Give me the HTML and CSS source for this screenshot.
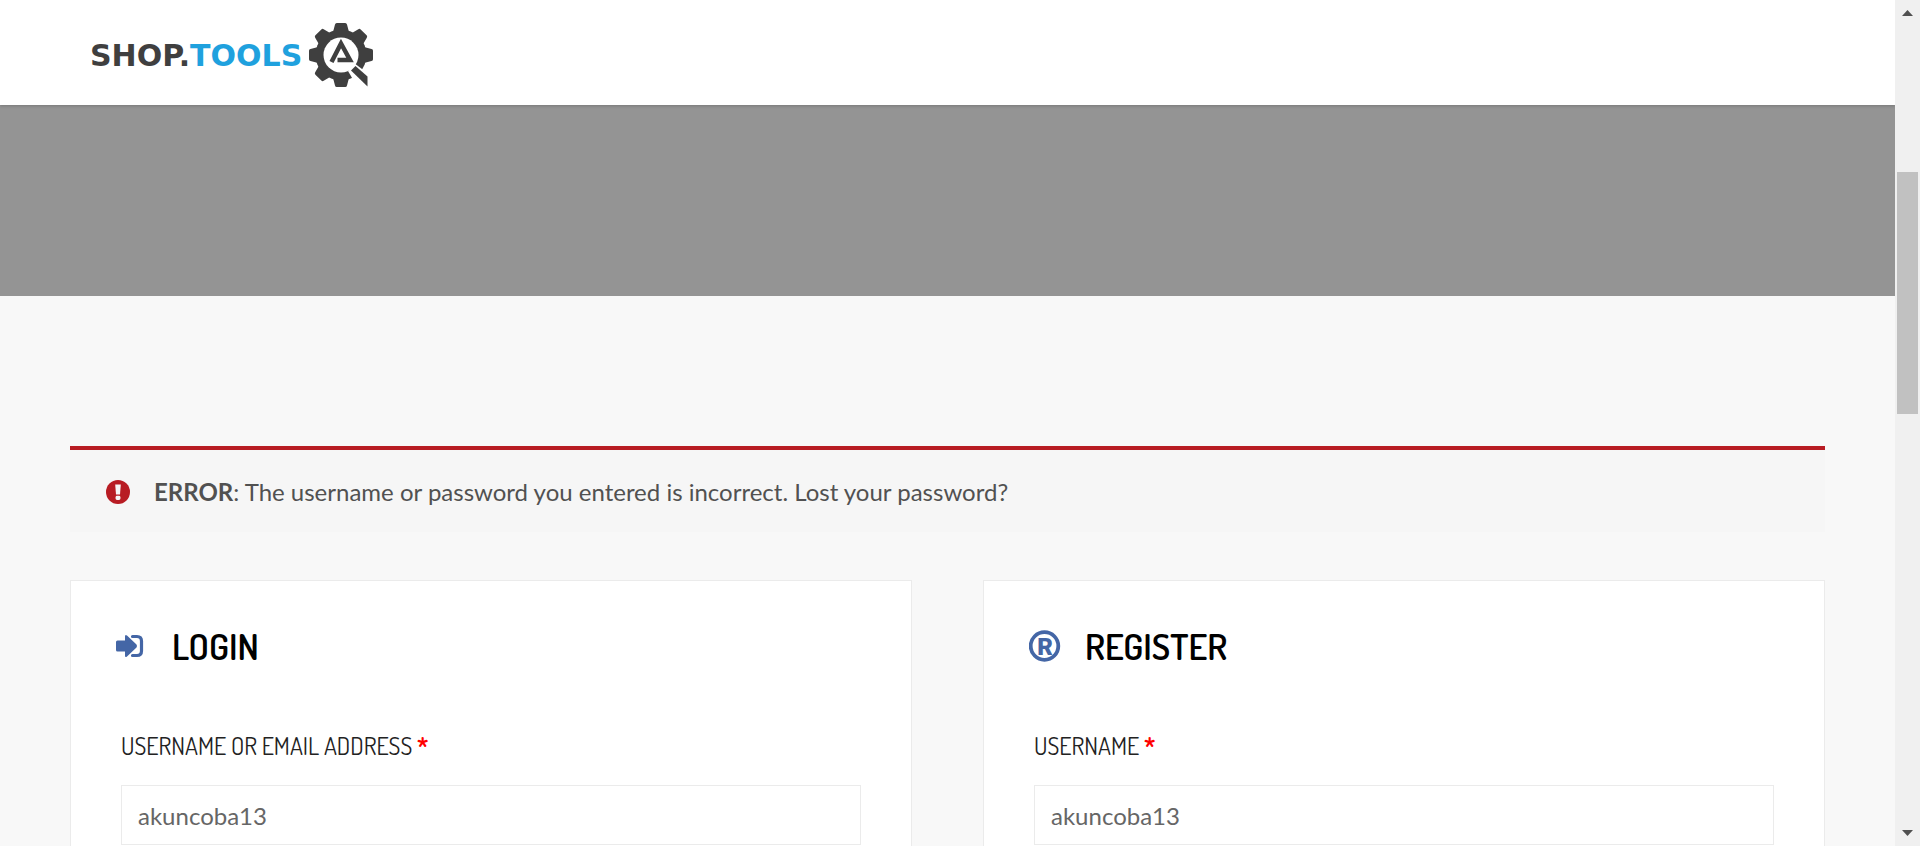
FILE: index.html
```html
<!DOCTYPE html>
<html lang="en">
<head>
<meta charset="utf-8">
<title>My Account - Shop.Tools</title>
<link rel="stylesheet" href="styles.css">
</head>
<body>
<div class="page">
  <header class="site-header">
    <a class="logo" href="#">
      <span class="logo-shop">SHOP.</span><span class="logo-tools">TOOLS</span>
      <svg class="logo-gear" viewBox="0 0 66 66" aria-hidden="true">
        <g fill="#3f3f3f">
          <circle cx="33" cy="33" r="25.500"/>
          <path id="tooth" d="M24.500 12L27 2.500Q27.300 1 28.800 1H37.200Q38.700 1 39 2.500L41.500 12Z"/>
          <use href="#tooth" transform="rotate(45 33 33)"/>
          <use href="#tooth" transform="rotate(90 33 33)"/>
          <use href="#tooth" transform="rotate(180 33 33)"/>
          <use href="#tooth" transform="rotate(225 33 33)"/>
          <use href="#tooth" transform="rotate(270 33 33)"/>
          <use href="#tooth" transform="rotate(315 33 33)"/>
        </g>
        <circle cx="33" cy="33" r="17.500" fill="#fff"/>
        <path d="M40 49L46 41L66 56V66H50Z" fill="#fff"/>
        <path d="M43 48.500L47.500 44L59.500 54.500V64.500Z" fill="#3f3f3f"/>
        <path d="M23.500 40L33 21.500L42 38H29.500" fill="none" stroke="#3f3f3f" stroke-width="4.500"/>
      </svg>
    </a>
  </header>
  <div class="banner"></div>
  <main class="content">
    <div class="notice" role="alert">
      <svg class="notice-icon" viewBox="0 0 24 24" aria-hidden="true">
        <circle cx="12" cy="12" r="12" fill="#b81c23"/>
        <path d="M9.200 4.500H14.800L14 14.500H10Z" fill="#f6f6f6"/>
        <rect x="9.600" y="15.800" width="4.800" height="4.200" rx="1.400" fill="#f6f6f6"/>
      </svg>
      <p class="notice-text"><strong>ERROR</strong>: The username or password you entered is incorrect. <a href="#">Lost your password?</a></p>
    </div>
    <div class="columns">
      <section class="card">
        <h2 class="card-title">
          <svg class="card-icon" viewBox="0 0 32 32" aria-hidden="true">
            <path d="M0 12Q0 10.500 1.500 10.500H9V6.500Q9 4 11 5.500L20.500 14.500Q21.500 16 20.500 17.500L11 26.500Q9 28 9 25.500V21.500H1.500Q0 21.500 0 20Z" fill="#4466a6"/>
            <path d="M16.500 6.500H21Q25.500 6.500 25.500 11V21Q25.500 25.500 21 25.500H16.500" fill="none" stroke="#4466a6" stroke-width="3.200" stroke-linecap="round"/>
          </svg>
          LOGIN
        </h2>
        <form class="form">
          <label class="label" for="login-user">USERNAME OR EMAIL ADDRESS <span class="required">*</span></label>
          <input class="field" id="login-user" type="text" value="akuncoba13">
        </form>
      </section>
      <section class="card">
        <h2 class="card-title">
          <svg class="card-icon" viewBox="0 0 32 32" aria-hidden="true">
            <circle cx="15.500" cy="16" r="13.800" fill="none" stroke="#4466a6" stroke-width="3.800"/>
            <text class="registered" x="16" y="24.500" text-anchor="middle">R</text>
          </svg>
          REGISTER
        </h2>
        <form class="form">
          <label class="label" for="register-user">USERNAME <span class="required">*</span></label>
          <input class="field" id="register-user" type="text" value="akuncoba13">
        </form>
      </section>
    </div>
  </main>
</div>
<div class="scrollbar" aria-hidden="true">
  <svg class="scroll-arrow" viewBox="0 0 25 25"><path d="M7 16L12.500 10L18 16Z"/></svg>
  <div class="scroll-track"><div class="scroll-thumb"></div></div>
  <svg class="scroll-arrow" viewBox="0 0 25 25"><path d="M7 9L12.500 15L18 9Z"/></svg>
</div>
</body>
</html>
```

FILE: styles.css
```css
* { box-sizing: border-box; }

body {
  margin: 0;
  display: flex;
  height: 100vh;
  overflow: hidden;
  background: #f8f8f8;
  color: #515151;
  font-family: Lato, sans-serif;
  font-size: 24px;
}

a { color: inherit; text-decoration: none; }

.page { flex: 1; min-width: 0; overflow: hidden; }

.site-header {
  position: relative;
  padding: 22px 90px 17px;
  background: #fff;
  box-shadow: 0 1px 3px rgba(0, 0, 0, 0.2);
}

.logo {
  display: flex;
  align-items: center;
  font: bold 30px "DejaVu Sans", sans-serif;
}
.logo-shop { color: #3f3f3f; }
.logo-tools { color: #1fa1de; }
.logo-gear { width: 66px; height: 66px; margin-left: 6px; }

.banner { height: 191px; background: #949494; }

.content { padding: 150px 70px 60px; }

.notice {
  display: flex;
  align-items: center;
  gap: 24px;
  padding: 27px 36px 25px;
  border-top: 4px solid #b81c23;
  background: #f6f6f6;
}
.notice-icon { flex: none; width: 24px; height: 24px; }
.notice-text { margin: 0; line-height: 30px; }

.columns {
  display: grid;
  grid-template-columns: 1fr 1fr;
  gap: 71px;
  margin-top: 48px;
}

.card {
  padding: 47px 45px;
  border: 1px solid #ebebeb;
  background: #fff;
}

.card-title {
  display: flex;
  align-items: center;
  gap: 24px;
  margin: 0;
  color: #000;
  font: 600 36px/36px Dosis, "Liberation Sans Narrow", Roboto, sans-serif;
}
.card-icon { flex: none; width: 32px; height: 32px; }
.registered { fill: #4466a6; font: 900 24px Roboto, sans-serif; }

.form {
  display: flex;
  flex-direction: column;
  gap: 24px;
  padding: 67px 5px 0;
}

.label {
  color: #222;
  font: 400 24px/30px Dosis, "Liberation Sans Narrow", Roboto, sans-serif;
}
.required { color: #f00; font-weight: bold; }

.field {
  width: 100%;
  height: 60px;
  padding: 0 16px;
  border: 1px solid #ebebeb;
  border-radius: 0;
  background: #fff;
  color: #666;
  font: 24px Lato, sans-serif;
}

.scrollbar {
  display: flex;
  flex-direction: column;
  flex: none;
  width: 25px;
  background: #f0f0f0;
}
.scroll-arrow { width: 25px; height: 25px; fill: #505050; }
.scroll-track {
  display: grid;
  flex: 1;
  grid-template-rows: 147fr 242fr 407fr;
  padding: 0 2px;
}
.scroll-thumb { grid-row: 2; background: #c1c1c1; }
```
